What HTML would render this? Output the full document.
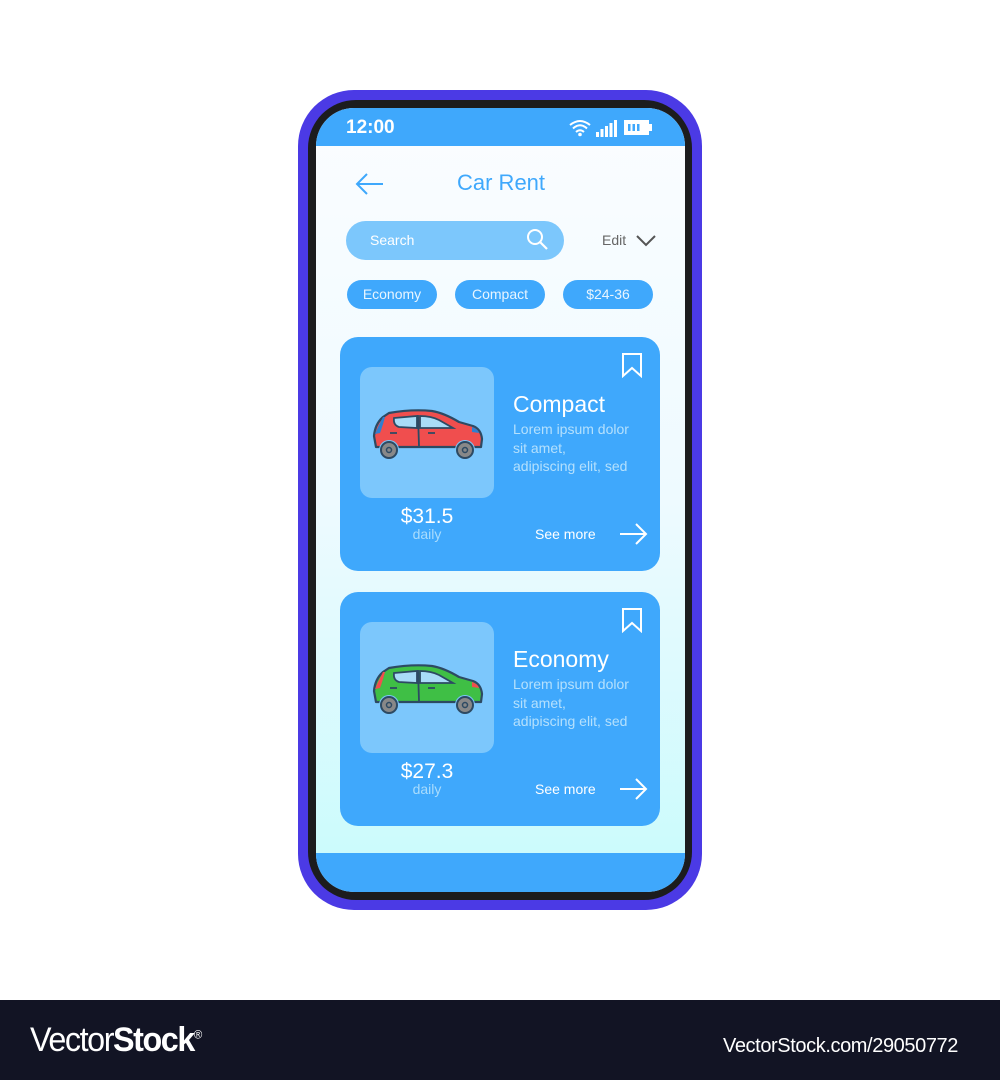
<!DOCTYPE html>
<html><head><meta charset="utf-8"><style>
*{margin:0;padding:0;box-sizing:border-box}
body{width:1000px;height:1080px;background:#fff;position:relative;overflow:hidden;font-family:"Liberation Sans",sans-serif}
.abs{position:absolute}
.phone{left:298px;top:90px;width:404px;height:820px;background:#4b3ae5;border-radius:56px}
.bezel{left:308px;top:100px;width:384px;height:800px;background:#1c1c1e;border-radius:48px}
.screen{left:316px;top:108px;width:369px;height:784px;border-radius:38px;overflow:hidden;background:linear-gradient(#fbfdff 0%,#eefaff 50%,#c8fbfc 100%)}
.status{left:0;top:0;width:369px;height:38px;background:#3fa8fc}
.bottom{left:0;top:745px;width:369px;height:39px;background:#3fa8fc}
.t{color:#fff;white-space:nowrap}
.pill{background:#3fa8fc;border-radius:15px;color:#e8f5ff;font-size:14px;text-align:center;line-height:29px;height:29px;width:90px}
.card{left:340px;width:320px;height:234px;background:#3fa8fc;border-radius:18px}
.img{left:20px;top:30px;width:134px;height:131px;background:#7cc7fc;border-radius:12px}
</style></head><body>
<div class="abs phone"></div>
<div class="abs bezel"></div>
<div class="abs screen">
  <div class="abs status"></div>
  <div class="abs t" style="left:30px;top:9px;font-size:19px;font-weight:bold">12:00</div>
  <svg class="abs" style="left:253px;top:10px" width="90" height="20" viewBox="0 0 90 20">
    <g fill="none" stroke="#fff" stroke-width="2"><path d="M1 7 Q11 -1 21 7"/><path d="M4 10.5 Q11 4 18 10.5"/><path d="M7 14 Q11 10.5 15 14"/></g>
    <circle cx="11" cy="16.5" r="1.8" fill="#fff"/>
    <g fill="#fff"><rect x="27" y="14" width="3" height="5"/><rect x="31.5" y="11" width="3" height="8"/><rect x="36" y="8" width="3" height="11"/><rect x="40.5" y="5" width="3" height="14"/><rect x="45" y="2" width="3" height="17"/>
    <rect x="55" y="2" width="25" height="15"/><rect x="80" y="6" width="3" height="7"/></g>
    <g fill="#3fa8fc"><rect x="59" y="6" width="2.5" height="7"/><rect x="63.5" y="6" width="2.5" height="7"/><rect x="68" y="6" width="2.5" height="7"/></g>
  </svg>
  <div class="abs bottom"></div>
</div>
<!-- header -->
<svg class="abs" style="left:355px;top:172px" width="30" height="24" viewBox="0 0 30 24"><path d="M28 12H2M12 2L2 12L12 22" fill="none" stroke="#3fa8fc" stroke-width="2"/></svg>
<div class="abs" style="left:457px;top:170px;font-size:22px;color:#3fa8fc">Car Rent</div>
<div class="abs" style="left:346px;top:221px;width:218px;height:39px;background:#7cc7fc;border-radius:20px"></div>
<div class="abs t" style="left:370px;top:232px;font-size:14px">Search</div>
<svg class="abs" style="left:526px;top:228px" width="24" height="24" viewBox="0 0 24 24"><circle cx="9" cy="9" r="7" fill="none" stroke="#fff" stroke-width="2"/><path d="M14 14L21 21" stroke="#fff" stroke-width="2.2"/></svg>
<div class="abs" style="left:602px;top:232px;font-size:14px;color:#666">Edit</div>
<svg class="abs" style="left:636px;top:234px" width="20" height="14" viewBox="0 0 20 14"><path d="M1 2L10 11L19 2" fill="none" stroke="#555" stroke-width="2"/></svg>
<div class="abs pill" style="left:347px;top:280px">Economy</div>
<div class="abs pill" style="left:455px;top:280px">Compact</div>
<div class="abs pill" style="left:563px;top:280px">$24-36</div>

<!-- card 1 -->
<div class="abs card" style="top:337px">
  <div class="abs img">
    <svg class="abs" style="left:12px;top:40px" width="112" height="54" viewBox="0 0 112 54">
      <path d="M4,40 L2,29 Q3,17 11,10 L17,6 Q40,2 60,4 Q72,6 87,15 L101,19 Q109,22 110,32 L109,40 Z" fill="#f04e4e" stroke="#2d4a63" stroke-width="2.2" stroke-linejoin="round"/>
      <path d="M11,10 L6,20 L3,27 L8,26 Q11,18 13,10 Z" fill="#2f7fd0"/>
      <path d="M100,20 Q106,22 107,26 L100,25 Z" fill="#2f7fd0"/>
      <path d="M22,11 L45,9 L45,21 L27,20 Q21,18 22,11 Z" fill="#a9dcf7" stroke="#2d4a63" stroke-width="1.8"/>
      <path d="M48,9 Q59,9 67,13 L81,21 L48,21 Z" fill="#a9dcf7" stroke="#2d4a63" stroke-width="1.8"/>
      <path d="M46,8 L47,39 M8,40 L105,40" stroke="#2d4a63" stroke-width="1.8"/>
      <path d="M18,26h7 M56,26h7" stroke="#2d4a63" stroke-width="1.8"/>
      <circle cx="17" cy="43" r="10" fill="#7cc7fc"/><circle cx="93" cy="43" r="10" fill="#7cc7fc"/>
      <circle cx="17" cy="43" r="8" fill="#888" stroke="#2d4a63" stroke-width="2"/><circle cx="93" cy="43" r="8" fill="#888" stroke="#2d4a63" stroke-width="2"/>
      <circle cx="17" cy="43" r="2.5" fill="none" stroke="#2d4a63" stroke-width="1.5"/><circle cx="93" cy="43" r="2.5" fill="none" stroke="#2d4a63" stroke-width="1.5"/>
    </svg>
  </div>
  <div class="abs t" style="left:20px;width:134px;text-align:center;top:168px;font-size:21px">$31.5</div>
  <div class="abs" style="left:20px;width:134px;text-align:center;top:189px;font-size:14px;color:#a9dcfd">daily</div>
  <div class="abs t" style="left:173px;top:54px;font-size:23px">Compact</div>
  <div class="abs" style="left:173px;top:83px;font-size:14px;line-height:18.5px;color:#b4e0fd">Lorem ipsum dolor<br>sit amet,<br>adipiscing elit, sed</div>
  <svg class="abs" style="left:281px;top:15px" width="22" height="26" viewBox="0 0 22 26"><path d="M2 2H20V24L11 16L2 24Z" fill="none" stroke="#fff" stroke-width="2"/></svg>
  <div class="abs t" style="left:195px;top:189px;font-size:14px">See more</div>
  <svg class="abs" style="left:278px;top:185px" width="30" height="24" viewBox="0 0 30 24"><path d="M2 12H28M18 2L28 12L18 22" fill="none" stroke="#fff" stroke-width="2"/></svg>
</div>

<!-- card 2 -->
<div class="abs card" style="top:592px">
  <div class="abs img">
    <svg class="abs" style="left:12px;top:40px" width="112" height="54" viewBox="0 0 112 54">
      <path d="M4,40 L2,29 Q3,17 11,10 L17,6 Q40,2 60,4 Q72,6 87,15 L101,19 Q109,22 110,32 L109,40 Z" fill="#3fbf45" stroke="#2d4a63" stroke-width="2.2" stroke-linejoin="round"/>
      <path d="M11,10 L6,20 L3,27 L8,26 Q11,18 13,10 Z" fill="#f04e4e"/>
      <path d="M100,20 Q106,22 107,26 L100,25 Z" fill="#f04e4e"/>
      <path d="M22,11 L45,9 L45,21 L27,20 Q21,18 22,11 Z" fill="#a9dcf7" stroke="#2d4a63" stroke-width="1.8"/>
      <path d="M48,9 Q59,9 67,13 L81,21 L48,21 Z" fill="#a9dcf7" stroke="#2d4a63" stroke-width="1.8"/>
      <path d="M46,8 L47,39 M8,40 L105,40" stroke="#2d4a63" stroke-width="1.8"/>
      <path d="M18,26h7 M56,26h7" stroke="#2d4a63" stroke-width="1.8"/>
      <circle cx="17" cy="43" r="10" fill="#7cc7fc"/><circle cx="93" cy="43" r="10" fill="#7cc7fc"/>
      <circle cx="17" cy="43" r="8" fill="#888" stroke="#2d4a63" stroke-width="2"/><circle cx="93" cy="43" r="8" fill="#888" stroke="#2d4a63" stroke-width="2"/>
      <circle cx="17" cy="43" r="2.5" fill="none" stroke="#2d4a63" stroke-width="1.5"/><circle cx="93" cy="43" r="2.5" fill="none" stroke="#2d4a63" stroke-width="1.5"/>
    </svg>
  </div>
  <div class="abs t" style="left:20px;width:134px;text-align:center;top:168px;font-size:21px">$27.3</div>
  <div class="abs" style="left:20px;width:134px;text-align:center;top:189px;font-size:14px;color:#a9dcfd">daily</div>
  <div class="abs t" style="left:173px;top:54px;font-size:23px">Economy</div>
  <div class="abs" style="left:173px;top:83px;font-size:14px;line-height:18.5px;color:#b4e0fd">Lorem ipsum dolor<br>sit amet,<br>adipiscing elit, sed</div>
  <svg class="abs" style="left:281px;top:15px" width="22" height="26" viewBox="0 0 22 26"><path d="M2 2H20V24L11 16L2 24Z" fill="none" stroke="#fff" stroke-width="2"/></svg>
  <div class="abs t" style="left:195px;top:189px;font-size:14px">See more</div>
  <svg class="abs" style="left:278px;top:185px" width="30" height="24" viewBox="0 0 30 24"><path d="M2 12H28M18 2L28 12L18 22" fill="none" stroke="#fff" stroke-width="2"/></svg>
</div>

<!-- footer -->
<div class="abs" style="left:0;top:1000px;width:1000px;height:80px;background:#121424"></div>
<div class="abs t" style="left:30px;top:1021px;font-size:34px;letter-spacing:-1.5px;transform:scaleX(0.95);transform-origin:left">Vector<b>Stock</b><sup style="font-size:12px">®</sup></div>
<div class="abs t" style="left:723px;top:1035px;font-size:20px;letter-spacing:-0.4px">VectorStock.com/29050772</div>
</body></html>
